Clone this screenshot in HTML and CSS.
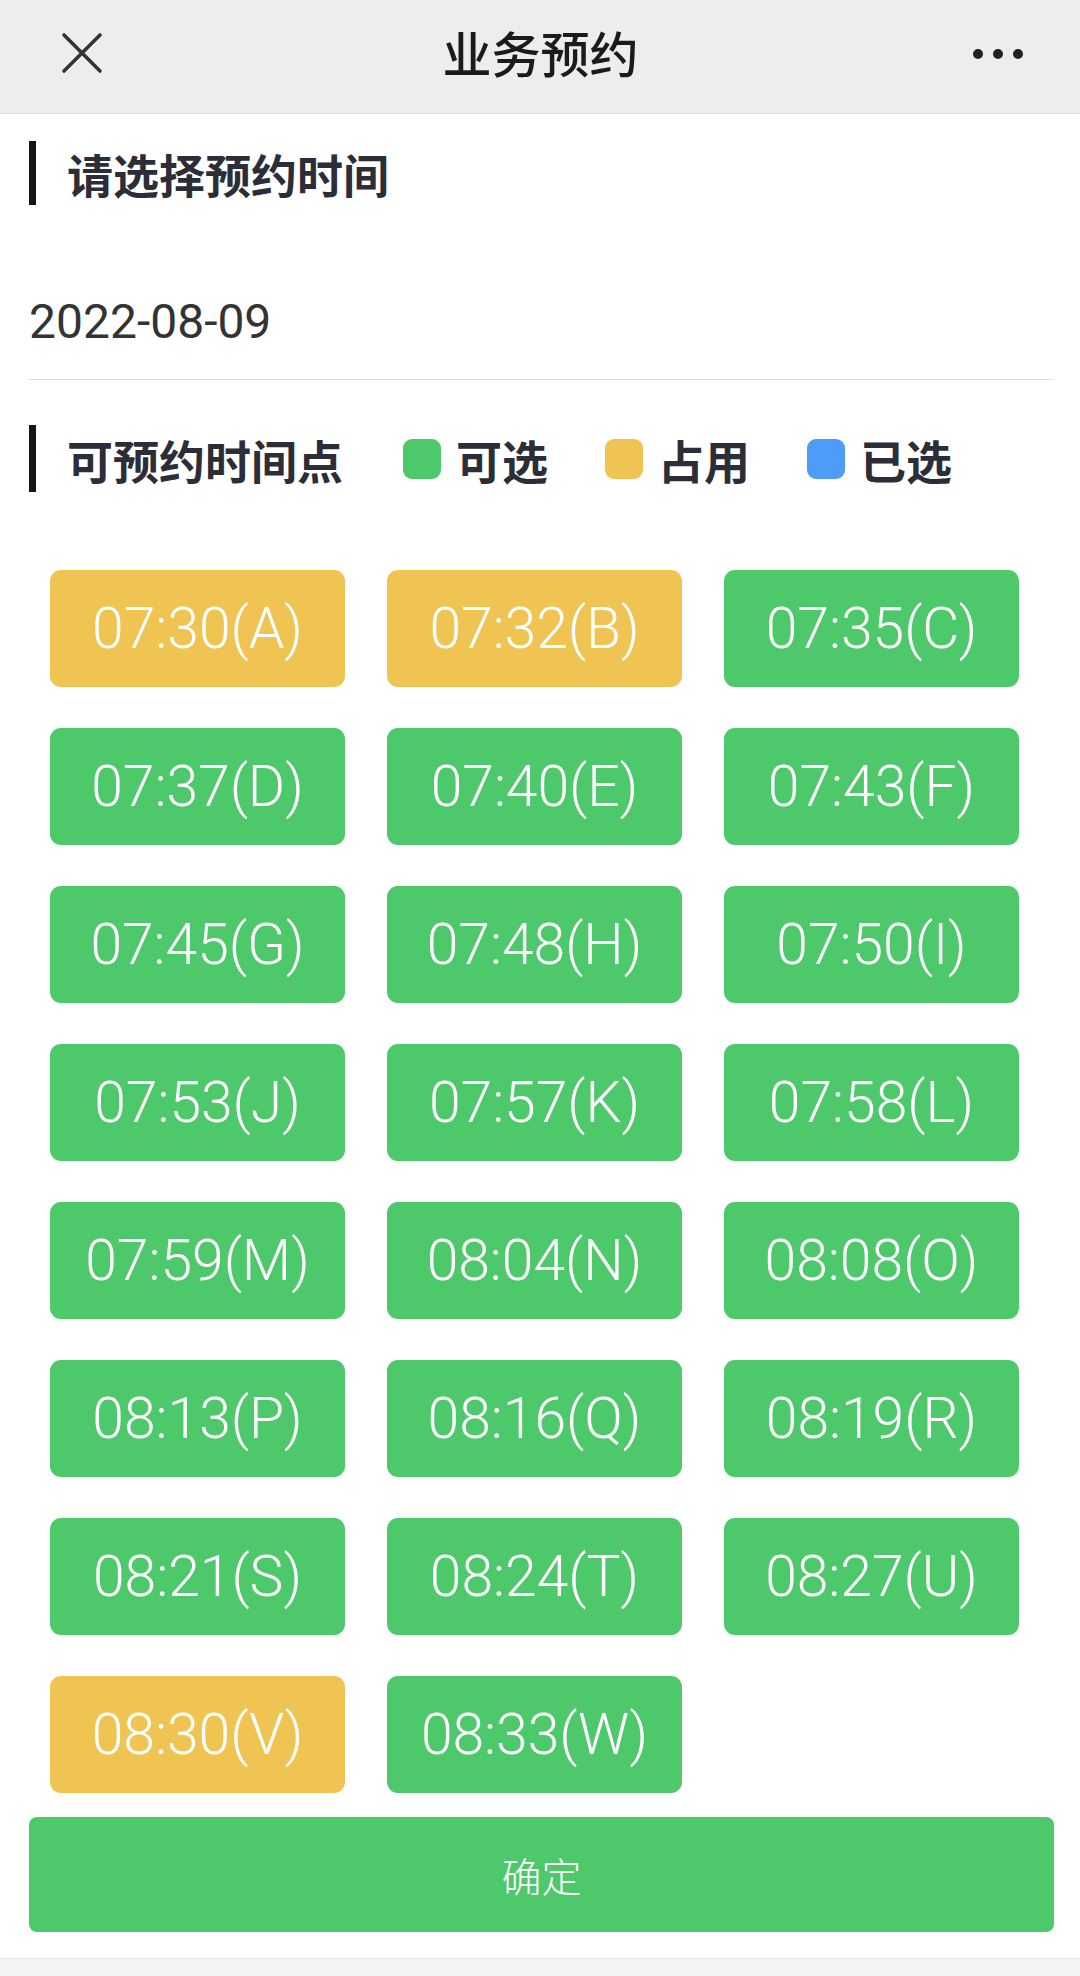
FILE: index.html
```html
<!DOCTYPE html>
<html lang="zh-CN">

<head>
    <meta charset="UTF-8">
    <meta name="viewport" content="width=device-width, initial-scale=1.0">
    <title>业务预约</title>
    <link rel="stylesheet" href="styles.css">
</head>

<body>
    <div class="topbar">
        <svg class="close" width="42" height="42" viewBox="0 0 42 42">
            <path d="M3 3 L39 39 M39 3 L3 39" stroke="#333" stroke-width="3.6" stroke-linecap="round" fill="none" />
        </svg>
        <h1>业务预约</h1>
        <svg class="more" width="52" height="12" viewBox="0 0 52 12">
            <circle cx="6" cy="6" r="5" fill="#222" />
            <circle cx="26" cy="6" r="5" fill="#222" />
            <circle cx="46" cy="6" r="5" fill="#222" />
        </svg>
    </div>

    <div class="main">
        <div class="tit tit1">请选择预约时间</div>
        <div class="date">2022-08-09</div>

        <div class="tit tit2">
            可预约时间点
            <span class="tag"><i class="dot green"></i>可选</span>
            <span class="tag"><i class="dot yellow"></i>占用</span>
            <span class="tag"><i class="dot blue"></i>已选</span>
        </div>

        <div class="timelist">
            <div class="time used">07:30(A)</div>
            <div class="time used">07:32(B)</div>
            <div class="time">07:35(C)</div>
            <div class="time">07:37(D)</div>
            <div class="time">07:40(E)</div>
            <div class="time">07:43(F)</div>
            <div class="time">07:45(G)</div>
            <div class="time">07:48(H)</div>
            <div class="time">07:50(I)</div>
            <div class="time">07:53(J)</div>
            <div class="time">07:57(K)</div>
            <div class="time">07:58(L)</div>
            <div class="time">07:59(M)</div>
            <div class="time">08:04(N)</div>
            <div class="time">08:08(O)</div>
            <div class="time">08:13(P)</div>
            <div class="time">08:16(Q)</div>
            <div class="time">08:19(R)</div>
            <div class="time">08:21(S)</div>
            <div class="time">08:24(T)</div>
            <div class="time">08:27(U)</div>
            <div class="time used">08:30(V)</div>
            <div class="time">08:33(W)</div>
        </div>

        <div class="btn">确定</div>
    </div>
    <div class="bottom"></div>
</body>

</html>
```

FILE: styles.css
```css
* {
    margin: 0;
    padding: 0;
    box-sizing: border-box;
}

body {
    width: 1080px;
    background: #fff;
    font-family: "Noto Sans CJK SC", "Noto Sans", sans-serif;
    color: #2b2e38;
}

.topbar {
    height: 114px;
    background: #ededed;
    border-bottom: 1px solid #e2e2e2;
    display: flex;
    align-items: center;
    justify-content: space-between;
    padding: 0 56px 10px 61px;
}

.topbar h1 {
    font-size: 49px;
    font-weight: 500;
    color: #1b1b1b;
    margin-left: 6px;
}

.close {
    display: block;
    margin-top: 2px;
}

.more {
    display: block;
    margin-top: 4px;
}

.main {
    padding: 0 26px 0 29px;
}

.tit {
    display: flex;
    align-items: center;
    border-left: 7px solid #151515;
    padding-left: 31px;
    font-size: 46px;
    font-weight: 700;
    color: #2b2e38;
}

.tit1 {
    margin-top: 27px;
    height: 64px;
}

.date {
    margin-top: 87px;
    line-height: 60px;
    padding-bottom: 27px;
    border-bottom: 1px solid #dedede;
    font-family: Roboto, "Liberation Sans", sans-serif;
    font-size: 48px;
    color: #333;
}

.tit2 {
    margin-top: 45px;
    height: 67px;
}

.tag {
    display: flex;
    align-items: center;
    margin-left: 60px;
}

.tag:nth-child(n+2) {
    margin-left: 57px;
}

.dot {
    width: 38px;
    height: 40px;
    border-radius: 9px;
    margin-right: 15px;
}

.green {
    background: #4dc86a;
}

.yellow {
    background: #f0c453;
}

.blue {
    background: #4d9cf8;
}

.timelist {
    margin: 78px 0 0 21px;
    display: grid;
    grid-template-columns: repeat(3, 295px);
    grid-auto-rows: 117px;
    column-gap: 42px;
    row-gap: 41px;
}

.time {
    background: #4dc86a;
    border-radius: 11px;
    display: flex;
    align-items: center;
    justify-content: center;
    color: #fff;
    font-family: Roboto, "Liberation Sans", sans-serif;
    font-weight: 300;
    font-size: 57px;
}

.time.used {
    background: #f0c453;
}

.btn {
    margin-top: 24px;
    height: 115px;
    border-radius: 8px;
    background: #4dc86a;
    color: #fff;
    font-size: 40px;
    font-weight: 300;
    display: flex;
    align-items: center;
    justify-content: center;
}

.bottom {
    margin-top: 26px;
    height: 18px;
    background: #f3f3f3;
    border-top: 1px solid #e6e6e6;
}
```
